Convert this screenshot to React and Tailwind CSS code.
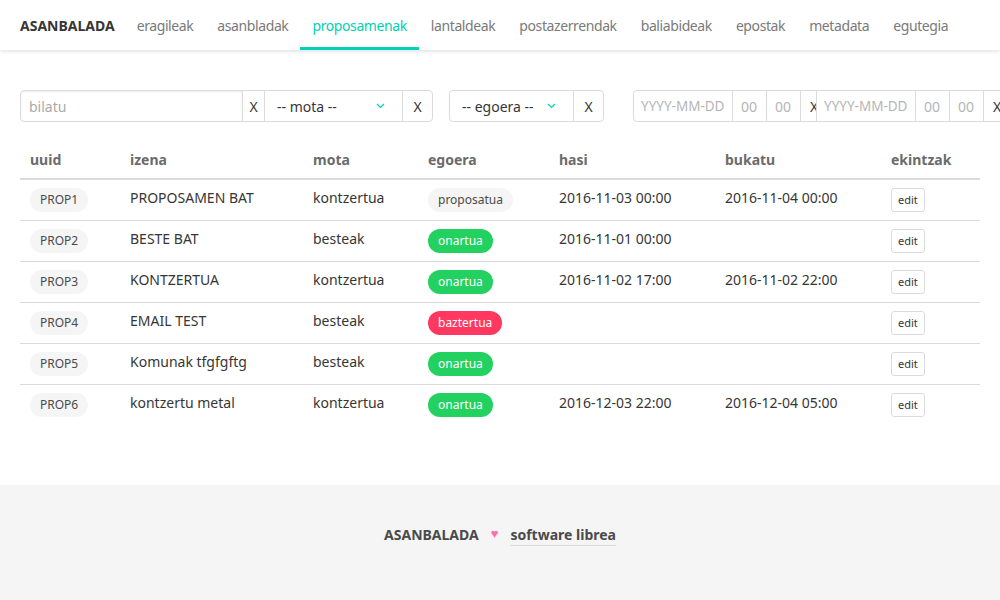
import React from "react";

const font = { fontFamily: '"Noto Sans", "Open Sans", sans-serif' };

const navItems = ["eragileak", "asanbladak", "proposamenak", "lantaldeak", "postazerrendak", "baliabideak", "epostak", "metadata", "egutegia"];

const rows = [
  { id: "PROP1", name: "PROPOSAMEN BAT", mota: "kontzertua", status: "proposatua", hasi: "2016-11-03 00:00", bukatu: "2016-11-04 00:00" },
  { id: "PROP2", name: "BESTE BAT", mota: "besteak", status: "onartua", hasi: "2016-11-01 00:00", bukatu: "" },
  { id: "PROP3", name: "KONTZERTUA", mota: "kontzertua", status: "onartua", hasi: "2016-11-02 17:00", bukatu: "2016-11-02 22:00" },
  { id: "PROP4", name: "EMAIL TEST", mota: "besteak", status: "baztertua", hasi: "", bukatu: "" },
  { id: "PROP5", name: "Komunak tfgfgftg", mota: "besteak", status: "onartua", hasi: "", bukatu: "" },
  { id: "PROP6", name: "kontzertu metal", mota: "kontzertua", status: "onartua", hasi: "2016-12-03 22:00", bukatu: "2016-12-04 05:00" },
];

function StatusTag({ s }) {
  if (s === "onartua")
    return <span className="inline-flex h-[24px] items-center rounded-full bg-[#23d160] px-[10px] text-[12px] text-white">{s}</span>;
  if (s === "baztertua")
    return <span className="inline-flex h-[24px] items-center rounded-full bg-[#ff3860] px-[10px] text-[12px] text-white">{s}</span>;
  return <span className="inline-flex h-[24px] items-center rounded-full bg-[#f5f5f5] px-[10px] text-[12px] text-[#4a4a4a]">{s}</span>;
}

function Chevron() {
  return (
    <svg width="9" height="6" viewBox="0 0 9 6" className="shrink-0">
      <path d="M1 1 L4.5 4.5 L8 1" fill="none" stroke="#00d1b2" strokeWidth="1.2" />
    </svg>
  );
}

function DateGroup({ first }) {
  return (
    <div className="flex h-[32px] shrink-0">
      <div className={`flex w-[100px] shrink-0 items-center whitespace-nowrap border border-[#dbdbdb] pl-[7px] text-[13.5px] text-[#b5b5b5] ${first ? "rounded-l-[4px]" : "relative z-10 -ml-[12px] bg-white"}`}>YYYY-MM-DD</div>
      <div className="-ml-px flex w-[35px] shrink-0 items-center border border-[#dbdbdb] pl-[8px] text-[14px] text-[#b5b5b5]">00</div>
      <div className="-ml-px flex w-[35px] shrink-0 items-center border border-[#dbdbdb] pl-[8px] text-[14px] text-[#b5b5b5]">00</div>
      <div className="-ml-px flex w-[28px] shrink-0 items-center border border-[#dbdbdb] pl-[9px] text-[14px] text-[#363636]">X</div>
    </div>
  );
}

export default function App() {
  return (
    <div className="flex min-h-[600px] w-[1000px] flex-col overflow-hidden bg-white text-[#4a4a4a]" style={font}>
      <nav className="relative z-10 flex h-[50px] items-stretch bg-white pl-[8px] shadow-[0_2px_3px_rgba(10,10,10,0.1)]">
        <div className="flex items-center pl-[12px] pr-[10px] text-[14px] font-bold text-[#363636]">ASANBALADA</div>
        {navItems.map((n) => (
          <div
            key={n}
            className={`flex items-center px-[12px] text-[14px] tracking-[-0.4px] ${n === "proposamenak" ? "border-b-[3px] border-[#00d1b2] pt-[3px] text-[#00d1b2]" : "text-[#7a7a7a]"}`}
          >
            {n}
          </div>
        ))}
      </nav>

      <main className="flex-1 px-[20px] pt-[40px]">
        <div className="flex items-center">
          <div className="flex h-[32px] shrink-0">
            <div className="flex w-[223px] items-center rounded-l-[4px] border border-[#dbdbdb] pl-[8px] text-[14px] text-[#aaaaaa] shadow-[inset_0_1px_2px_rgba(10,10,10,0.08)]">bilatu</div>
            <div className="-ml-px flex w-[23px] items-center justify-center border border-[#dbdbdb] text-[14px] text-[#363636]">X</div>
            <div className="-ml-px flex w-[139px] items-center justify-between border border-[#dbdbdb] pl-[12px] pr-[17px] text-[14px] text-[#363636]">
              <span>-- mota --</span>
              <Chevron />
            </div>
            <div className="-ml-px flex w-[31px] items-center justify-center rounded-r-[4px] border border-[#dbdbdb] text-[14px] text-[#363636]">X</div>
          </div>

          <div className="ml-[16px] flex h-[32px] shrink-0">
            <div className="flex w-[125px] items-center justify-between rounded-l-[4px] border border-[#dbdbdb] pl-[12px] pr-[17px] text-[14px] text-[#363636]">
              <span>-- egoera --</span>
              <Chevron />
            </div>
            <div className="-ml-px flex w-[31px] items-center justify-center rounded-r-[4px] border border-[#dbdbdb] text-[14px] text-[#363636]">X</div>
          </div>

          <div className="ml-[29px] flex shrink-0">
            <DateGroup first />
            <DateGroup />
          </div>
        </div>

        <table className="mt-[19px] w-[960px] table-fixed border-collapse text-[14px]">
          <colgroup>
            <col className="w-[100px]" />
            <col className="w-[183px]" />
            <col className="w-[115px]" />
            <col className="w-[131px]" />
            <col className="w-[166px]" />
            <col className="w-[166px]" />
            <col className="w-[99px]" />
          </colgroup>
          <thead>
            <tr className="border-b-2 border-[#dbdbdb]">
              {["uuid", "izena", "mota", "egoera", "hasi", "bukatu", "ekintzak"].map((h) => (
                <th key={h} className="h-[38px] px-[10px] text-left align-middle text-[14px] font-bold text-[#6b6b6b]">{h}</th>
              ))}
            </tr>
          </thead>
          <tbody>
            {rows.map((r, i) => (
              <tr key={r.id} className={i < rows.length - 1 ? "border-b border-[#dbdbdb]" : ""}>
                <td className="h-[41px] px-[10px] pt-[8px] align-top">
                  <span className="inline-flex h-[24px] items-center rounded-full bg-[#f5f5f5] px-[10px] text-[12px] text-[#4a4a4a]">{r.id}</span>
                </td>
                <td className="px-[10px] pt-[7px] align-top text-[#363636]">{r.name}</td>
                <td className="px-[10px] pt-[7px] align-top text-[#363636]">{r.mota}</td>
                <td className="px-[10px] pt-[8px] align-top"><StatusTag s={r.status} /></td>
                <td className="px-[10px] pt-[7px] align-top text-[#363636]">{r.hasi}</td>
                <td className="px-[10px] pt-[7px] align-top text-[#363636]">{r.bukatu}</td>
                <td className="px-[10px] pt-[8px] align-top">
                  <span className="inline-flex h-[24px] items-center rounded-[3px] border border-[#dbdbdb] px-[6px] text-[11px] text-[#363636]">edit</span>
                </td>
              </tr>
            ))}
          </tbody>
        </table>
      </main>

      <footer className="mt-[60px] flex h-[115px] items-start justify-center bg-[#f5f5f5] pt-[39px] text-[14px]">
        <span className="font-bold text-[#4a4a4a]">ASANBALADA</span>
        <span className="mx-[12px] text-[13px] text-[#ff6eb4]">♥</span>
        <span className="border-b border-[#dbdbdb] font-bold text-[#4a4a4a]">software librea</span>
      </footer>
    </div>
  );
}
